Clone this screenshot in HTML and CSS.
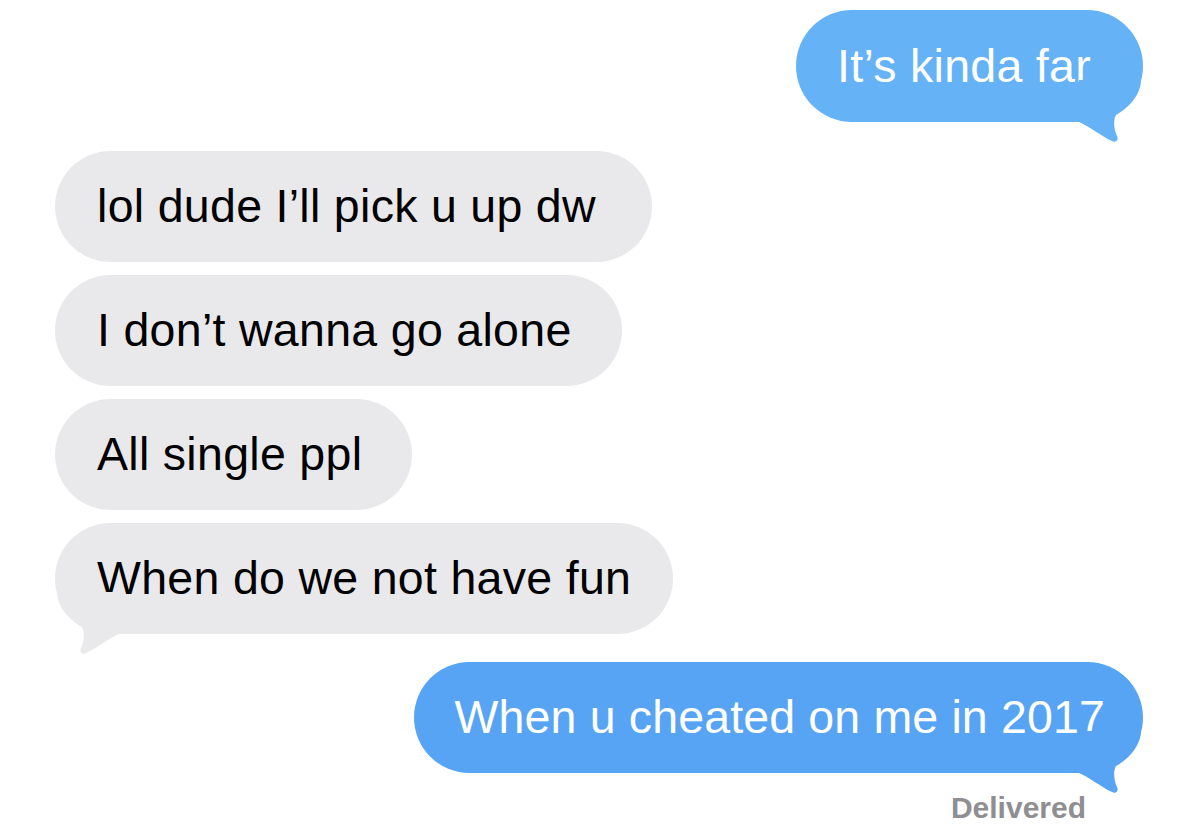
FILE: index.html
```html
<!DOCTYPE html>
<html lang="en">
<head>
<meta charset="utf-8">
<title>Messages</title>
<link rel="stylesheet" href="styles.css">
</head>
<body>
<div class="thread">
  <div class="row sent first">
    <div class="bubble out light">It’s kinda far
      <svg class="tail tail-out" viewBox="0 0 64 64" width="64" height="64"><path d="M0 0 L62 0 C62 14 50 28 37 35 C34 40 35 50 38 56 C40 60 37 63 33 61 C22 56 10 46 0 42 Z"/></svg>
    </div>
  </div>
  <div class="group">
    <div class="row"><div class="bubble in wide">lol dude I’ll pick u up dw</div></div>
    <div class="row"><div class="bubble in">I don’t wanna go alone</div></div>
    <div class="row"><div class="bubble in">All single ppl</div></div>
    <div class="row"><div class="bubble in snug">When do we not have fun
      <svg class="tail tail-in" viewBox="0 0 64 64" width="64" height="64"><path d="M0 0 L62 0 C62 14 50 28 37 35 C34 40 35 50 38 56 C40 60 37 63 33 61 C22 56 10 46 0 42 Z"/></svg>
    </div></div>
  </div>
  <div class="row sent last">
    <div class="bubble out dark">When u cheated on me in 2017
      <svg class="tail tail-out" viewBox="0 0 64 64" width="64" height="64"><path d="M0 0 L62 0 C62 14 50 28 37 35 C34 40 35 50 38 56 C40 60 37 63 33 61 C22 56 10 46 0 42 Z"/></svg>
    </div>
  </div>
  <div class="status">Delivered</div>
</div>
</body>
</html>
```

FILE: styles.css
```css
html, body {
  margin: 0;
  padding: 0;
  background: #ffffff;
}
body {
  width: 1200px;
  height: 824px;
  overflow: hidden;
  font-family: "Liberation Sans", Arial, Helvetica, sans-serif;
}
.thread {
  display: flex;
  flex-direction: column;
  padding: 10px 57px 0 55px;
}
.row {
  display: flex;
}
.row.sent {
  justify-content: flex-end;
}
.row.first {
  margin-bottom: 29px;
}
.row.last {
  margin-top: 28px;
}
.group {
  display: flex;
  flex-direction: column;
  gap: 13px;
}
.bubble {
  position: relative;
  font-size: 46.5px;
  line-height: 57px;
  letter-spacing: 0.3px;
  padding: 27px 50px 27px 42px;
  border-radius: 56px;
  white-space: nowrap;
}
.bubble.in {
  background: #e9e9eb;
  color: #000000;
}
.bubble.wide {
  padding-right: 56px;
}
.bubble.snug {
  padding-right: 42px;
}
.bubble.out {
  color: #ffffff;
  padding-left: 41px;
}
.bubble.light {
  background: #66b2f6;
  padding-top: 28px;
  padding-right: 52px;
}
.bubble.dark {
  background: #58a4f4;
  padding-right: 38px;
  letter-spacing: 0.15px;
}
.tail {
  position: absolute;
  bottom: -22px;
  display: block;
}
.tail-out {
  right: 0;
}
.tail-out path {
  fill: currentColor;
}
.light .tail-out { color: #66b2f6; }
.dark .tail-out { color: #58a4f4; }
.tail-in {
  left: 0;
  transform: scaleX(-1);
}
.tail-in path {
  fill: #e9e9eb;
}
.status {
  align-self: flex-end;
  margin: 20px 57px 0 0;
  font-size: 30px;
  font-weight: 700;
  color: #8e8e93;
  line-height: 30px;
}
```
